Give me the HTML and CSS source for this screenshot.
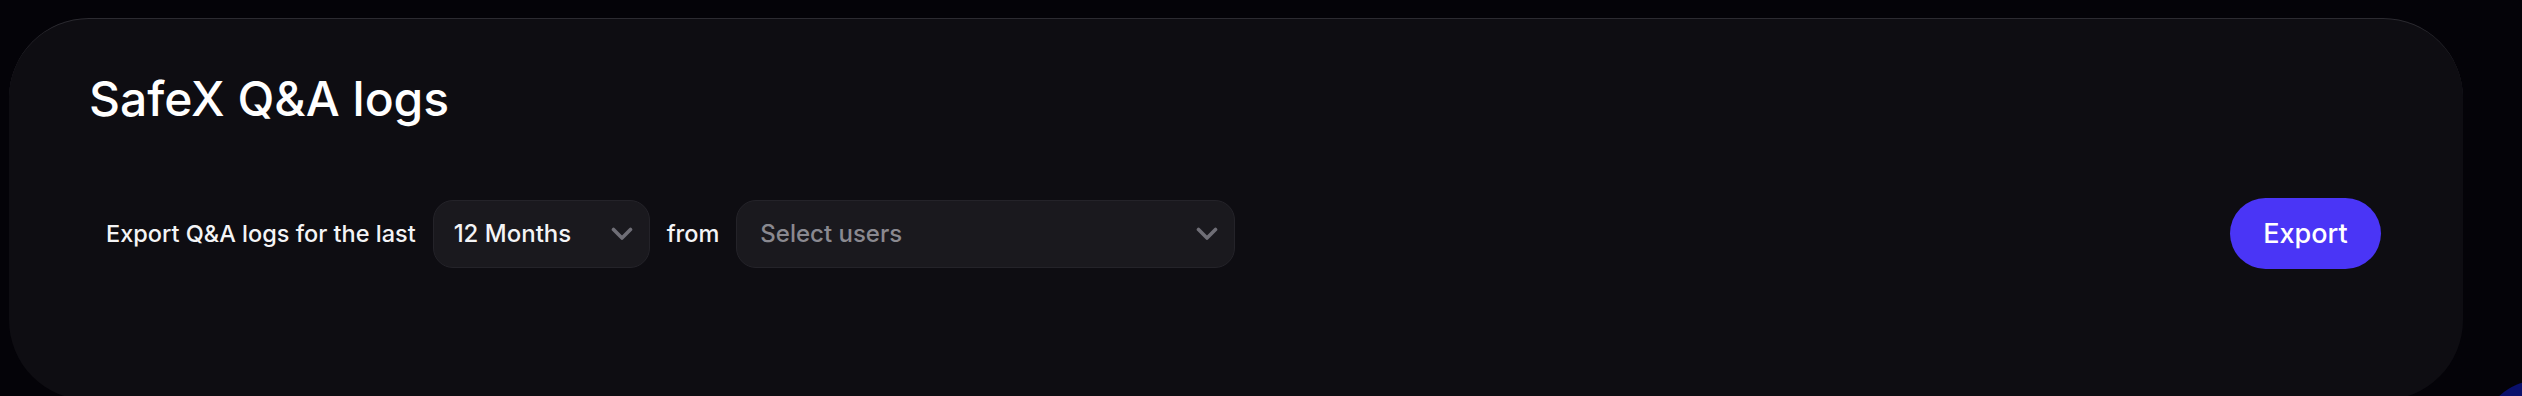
FILE: index.html
```html
<!DOCTYPE html>
<html lang="en">
<head>
<meta charset="utf-8">
<title>SafeX Q&amp;A logs</title>
<link rel="stylesheet" href="styles.css">
</head>
<body>
  <main class="page">
    <section class="card">
      <h1 class="title">SafeX Q&amp;A logs</h1>
      <div class="row">
        <div class="filters">
          <span class="label">Export Q&amp;A logs for the last</span>
          <div class="select select-period">
            <span class="select-value">12 Months</span>
            <svg class="chevron" viewBox="0 0 24 14" aria-hidden="true"><path d="M3.5 2.5l8.5 8.5 8.5-8.5" /></svg>
          </div>
          <span class="label">from</span>
          <div class="select select-users">
            <span class="select-placeholder">Select users</span>
            <svg class="chevron" viewBox="0 0 24 14" aria-hidden="true"><path d="M3.5 2.5l8.5 8.5 8.5-8.5" /></svg>
          </div>
        </div>
        <button class="export-btn" type="button">Export</button>
      </div>
    </section>
  </main>
  <div class="launcher"></div>
</body>
</html>
```

FILE: styles.css
```css
html, body {
  margin: 0;
  height: 396px;
  overflow: hidden;
  background: #040308;
}

body {
  font-family: Inter, "Noto Sans", "Liberation Sans", sans-serif;
  color: #f2f2f4;
  position: relative;
}

.page {
  padding: 18px 59px 0 9px;
}

.card {
  height: 382px;
  box-sizing: border-box;
  background: #0e0d12;
  border-top: 1px solid #2c2b31;
  border-radius: 80px;
  padding: 51px 82px 0 80px;
}

.title {
  margin: 0;
  font-size: 48px;
  line-height: 58px;
  font-weight: 500;
  letter-spacing: 0;
  color: #ffffff;
}

.row {
  margin-top: 70px;
  padding-left: 17px;
  display: flex;
  align-items: center;
  justify-content: space-between;
}

.filters {
  display: flex;
  align-items: center;
  gap: 17px;
}

.label {
  font-size: 23.5px;
  font-weight: 500;
  color: #f4f4f6;
}

.select {
  height: 68px;
  box-sizing: border-box;
  display: flex;
  align-items: center;
  justify-content: space-between;
  background: #1a191e;
  border: 1px solid #242329;
  border-radius: 20px;
  padding: 0 15px 0 20px;
  font-size: 24px;
  font-weight: 500;
}

.select-period {
  width: 217px;
}

.select-users {
  width: 499px;
  padding-left: 23px;
}

.select-value {
  color: #f4f4f6;
}

.select-placeholder {
  color: #8a8990;
  font-weight: 500;
}

.chevron {
  width: 24px;
  height: 14px;
  fill: none;
  stroke: #6f6e76;
  stroke-width: 3.6;
  stroke-linecap: round;
  stroke-linejoin: round;
}

.export-btn {
  height: 71px;
  width: 151px;
  border: none;
  border-radius: 36px;
  background: #4a35f6;
  color: #ffffff;
  font-family: Inter, "Noto Sans", "Liberation Sans", sans-serif;
  font-size: 27px;
  font-weight: 500;
  padding: 0;
}

.launcher {
  position: absolute;
  left: 2480px;
  top: 380px;
  width: 120px;
  height: 120px;
  border-radius: 50%;
  background: #0a106c;
}
```
